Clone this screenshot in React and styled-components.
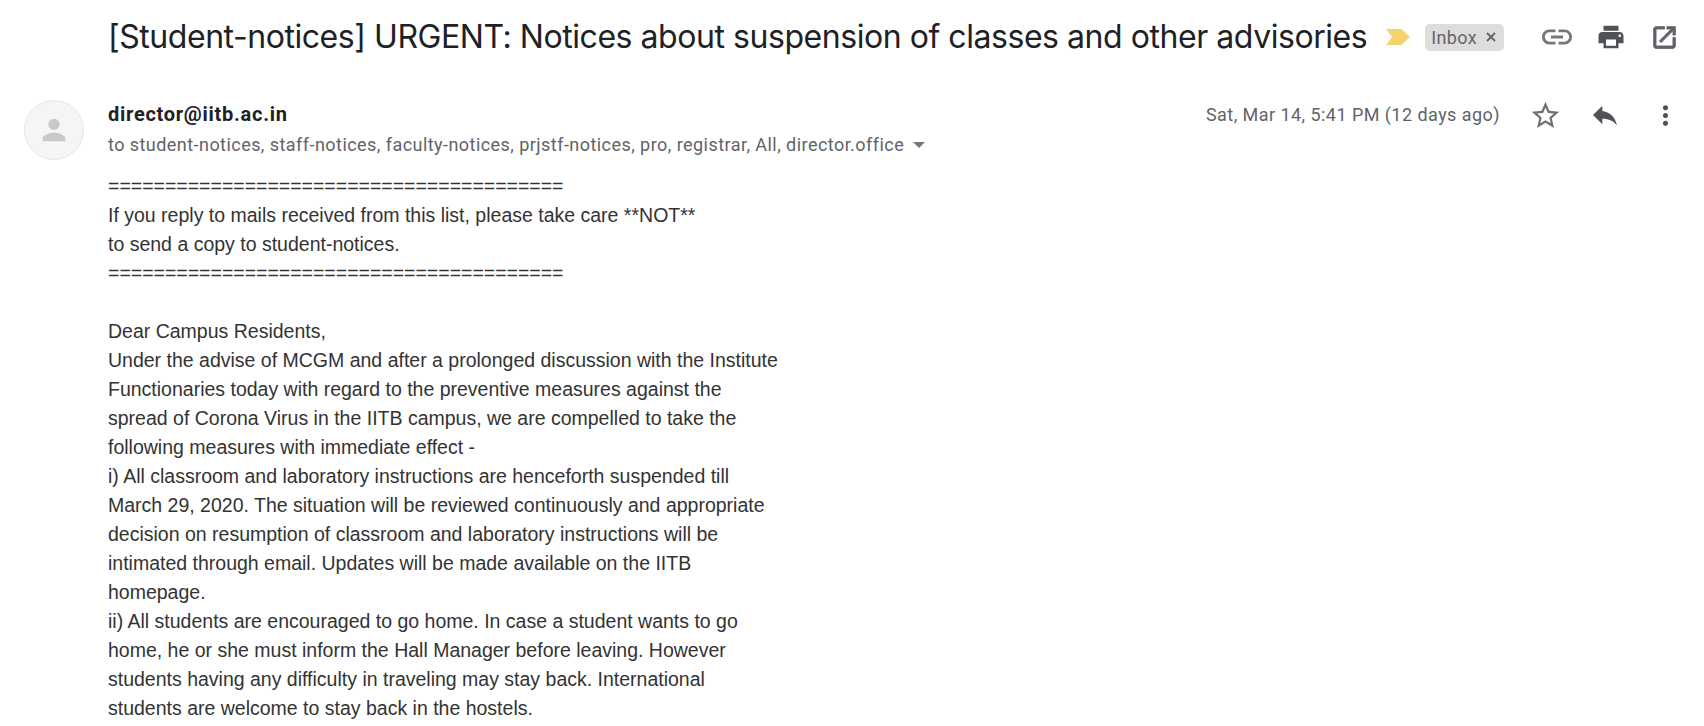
import React from "react";
import styled, { createGlobalStyle } from "styled-components";

const GlobalStyle = createGlobalStyle`
  html, body {
    margin: 0;
    padding: 0;
    background: #fff;
    height: 100%;
    overflow: hidden;
  }
`;

const Page = styled.div`
  width: 1704px;
  height: 726px;
  overflow: hidden;
  background: #fff;
  font-family: Roboto, "Liberation Sans", sans-serif;
`;

const SubjectRow = styled.div`
  display: flex;
  align-items: center;
  height: 74px;
  padding-left: 108px;
`;

const Subject = styled.h2`
  margin: 0 0 1px;
  font-family: Inter, Roboto, sans-serif;
  font-weight: 400;
  font-size: 32px;
  letter-spacing: -0.45px;
  color: #202124;
  white-space: nowrap;
`;

const Marker = styled.svg`
  width: 24px;
  height: 20px;
  margin-left: 19px;
  flex: none;
`;

const Chip = styled.div`
  display: flex;
  align-items: center;
  height: 27px;
  margin-left: 15px;
  padding: 0 6px 0 6px;
  border-radius: 5px;
  background: #dddddd;
  color: #666;
  font-size: 18px;
  letter-spacing: 0.35px;
`;

const ChipClose = styled.svg`
  width: 14px;
  height: 14px;
  margin-left: 7px;
`;

const HeaderIcons = styled.div`
  display: flex;
  align-items: center;
  margin-left: 26px;
`;

const IconSlot = styled.div`
  display: flex;
  align-items: center;
  justify-content: center;
  width: ${(p) => p.$width}px;
`;

const Glyph = styled.svg`
  width: ${(p) => p.$size || 30}px;
  height: ${(p) => p.$size || 30}px;
  fill: ${(p) => p.$fill || "#5f6368"};
  flex: none;
`;

const MessageHead = styled.div`
  display: flex;
  padding: 26px 0 0 24px;
`;

const Avatar = styled.div`
  display: flex;
  align-items: center;
  justify-content: center;
  width: 60px;
  height: 60px;
  box-sizing: border-box;
  border-radius: 50%;
  border: 1px solid #e6e6e6;
  background: #f5f5f5;
  flex: none;
`;

const Sender = styled.div`
  flex: 1;
  margin: -1px 0 0 24px;
  min-width: 0;
`;

const SenderName = styled.div`
  height: 30px;
  line-height: 30px;
  font-size: 20px;
  font-weight: 700;
  letter-spacing: 0.73px;
  color: #202124;
`;

const Recipients = styled.div`
  display: flex;
  align-items: center;
  height: 30px;
  font-size: 18px;
  letter-spacing: 0.45px;
  color: #5f6368;
  white-space: nowrap;
`;

const Caret = styled.span`
  width: 0;
  height: 0;
  margin: 2px 0 0 9px;
  border-left: 6.5px solid transparent;
  border-right: 6.5px solid transparent;
  border-top: 6px solid #777;
`;

const Meta = styled.div`
  display: flex;
  align-items: center;
  align-self: flex-start;
  height: 30px;
  margin-top: -1px;
  font-size: 18px;
  letter-spacing: 0.45px;
  color: #5f6368;
  white-space: nowrap;
`;

const MetaIcons = styled.div`
  display: flex;
  align-items: center;
  margin: 2px 9px 0 15px;
`;

const Body = styled.div`
  margin: 12px 0 0 108px;
  font-family: "Liberation Sans", Arial, sans-serif;
  font-size: 19.5px;
  line-height: 29px;
  color: #333;
`;

const Line = styled.div`
  min-height: 29px;
  white-space: nowrap;
`;

const lines = [
  "========================================",
  "If you reply to mails received from this list, please take care **NOT**",
  "to send a copy to student-notices.",
  "========================================",
  "",
  "Dear Campus Residents,",
  "Under the advise of MCGM and after a prolonged discussion with the Institute",
  "Functionaries today with regard to the preventive measures against the",
  "spread of Corona Virus in the IITB campus, we are compelled to take the",
  "following measures with immediate effect -",
  "i) All classroom and laboratory instructions are henceforth suspended till",
  "March 29, 2020. The situation will be reviewed continuously and appropriate",
  "decision on resumption of classroom and laboratory instructions will be",
  "intimated through email. Updates will be made available on the IITB",
  "homepage.",
  "ii) All students are encouraged to go home. In case a student wants to go",
  "home, he or she must inform the Hall Manager before leaving. However",
  "students having any difficulty in traveling may stay back. International",
  "students are welcome to stay back in the hostels.",
];

export default function App() {
  return (
    <Page>
      <GlobalStyle />
      <SubjectRow>
        <Subject>[Student-notices] URGENT: Notices about suspension of classes and other advisories</Subject>
        <Marker viewBox="0 0 24 20">
          <path d="M0 2h15.5L24 10l-8.5 8H0l6-8z" fill="#f7d46b" />
        </Marker>
        <Chip>
          Inbox
          <ChipClose viewBox="0 0 14 14">
            <path d="M3 3l8 8M11 3l-8 8" stroke="#666" strokeWidth="1.8" fill="none" />
          </ChipClose>
        </Chip>
        <HeaderIcons>
          <IconSlot $width={54}>
            <Glyph viewBox="0 0 24 24" $size={36} $fill="#777">
              <path d="M3.9 12c0-1.71 1.39-3.1 3.1-3.1h4V7H7c-2.76 0-5 2.24-5 5s2.24 5 5 5h4v-1.9H7c-1.71 0-3.1-1.39-3.1-3.1zM8 13h8v-2H8v2zm9-6h-4v1.9h4c1.71 0 3.1 1.39 3.1 3.1s-1.39 3.1-3.1 3.1h-4V17h4c2.76 0 5-2.24 5-5s-2.24-5-5-5z" />
            </Glyph>
          </IconSlot>
          <IconSlot $width={54}>
            <Glyph viewBox="0 0 24 24" $size={30} $fill="#4f5357">
              <path d="M19 8H5c-1.66 0-3 1.34-3 3v6h4v4h12v-4h4v-6c0-1.66-1.34-3-3-3zm-3 11H8v-5h8v5zm3-7c-.55 0-1-.45-1-1s.45-1 1-1 1 .45 1 1-.45 1-1 1zm-1-9H6v4h12V3z" />
            </Glyph>
          </IconSlot>
          <IconSlot $width={54}>
            <Glyph viewBox="0 0 24 24" $size={29} $fill="#5f6368">
              <path
                d="M19 19H5V5h7V3H5c-1.11 0-2 .9-2 2v14c0 1.1.89 2 2 2h14c1.1 0 2-.9 2-2v-7h-2v7zM14 3v2h3.59l-9.83 9.83 1.41 1.41L19 6.41V10h2V3h-7z"
                stroke="#5f6368"
                strokeWidth="0.7"
              />
            </Glyph>
          </IconSlot>
        </HeaderIcons>
      </SubjectRow>
      <MessageHead>
        <Avatar>
          <Glyph viewBox="0 0 24 24" $size={34} $fill="#c9c9c9">
            <path d="M12 12c2.21 0 4-1.79 4-4s-1.79-4-4-4-4 1.79-4 4 1.79 4 4 4zm0 2c-2.67 0-8 1.34-8 4v2h16v-2c0-2.66-5.33-4-8-4z" />
          </Glyph>
        </Avatar>
        <Sender>
          <SenderName>director@iitb.ac.in</SenderName>
          <Recipients>
            to student-notices, staff-notices, faculty-notices, prjstf-notices, pro, registrar, All, director.office
            <Caret />
          </Recipients>
        </Sender>
        <Meta>
          Sat, Mar 14, 5:41 PM (12 days ago)
          <MetaIcons>
            <IconSlot $width={60}>
              <Glyph viewBox="0 0 24 24" $size={33} $fill="#707070">
                <path d="M22 9.24l-7.19-.62L12 2 9.19 8.63 2 9.24l5.46 4.73L5.82 21 12 17.27 18.18 21l-1.63-7.03L22 9.24zM12 15.4l-3.76 2.27 1-4.28-3.32-2.88 4.38-.38L12 6.1l1.71 4.04 4.38.38-3.32 2.88 1 4.28L12 15.4z" />
              </Glyph>
            </IconSlot>
            <IconSlot $width={60}>
              <Glyph viewBox="0 0 24 24" $size={32} $fill="#4f5357">
                <path d="M10 9V5l-7 7 7 7v-4.1c5 0 8.5 1.6 11 5.1-1-5-4-10-11-11z" />
              </Glyph>
            </IconSlot>
            <IconSlot $width={60}>
              <Glyph viewBox="0 0 24 24" $size={31} $fill="#4f5357">
                <path d="M12 8c1.1 0 2-.9 2-2s-.9-2-2-2-2 .9-2 2 .9 2 2 2zm0 2c-1.1 0-2 .9-2 2s.9 2 2 2 2-.9 2-2-.9-2-2-2zm0 6c-1.1 0-2 .9-2 2s.9 2 2 2 2-.9 2-2-.9-2-2-2z" />
              </Glyph>
            </IconSlot>
          </MetaIcons>
        </Meta>
      </MessageHead>
      <Body>
        {lines.map((line, i) => (
          <Line key={i}>{line}</Line>
        ))}
      </Body>
    </Page>
  );
}
